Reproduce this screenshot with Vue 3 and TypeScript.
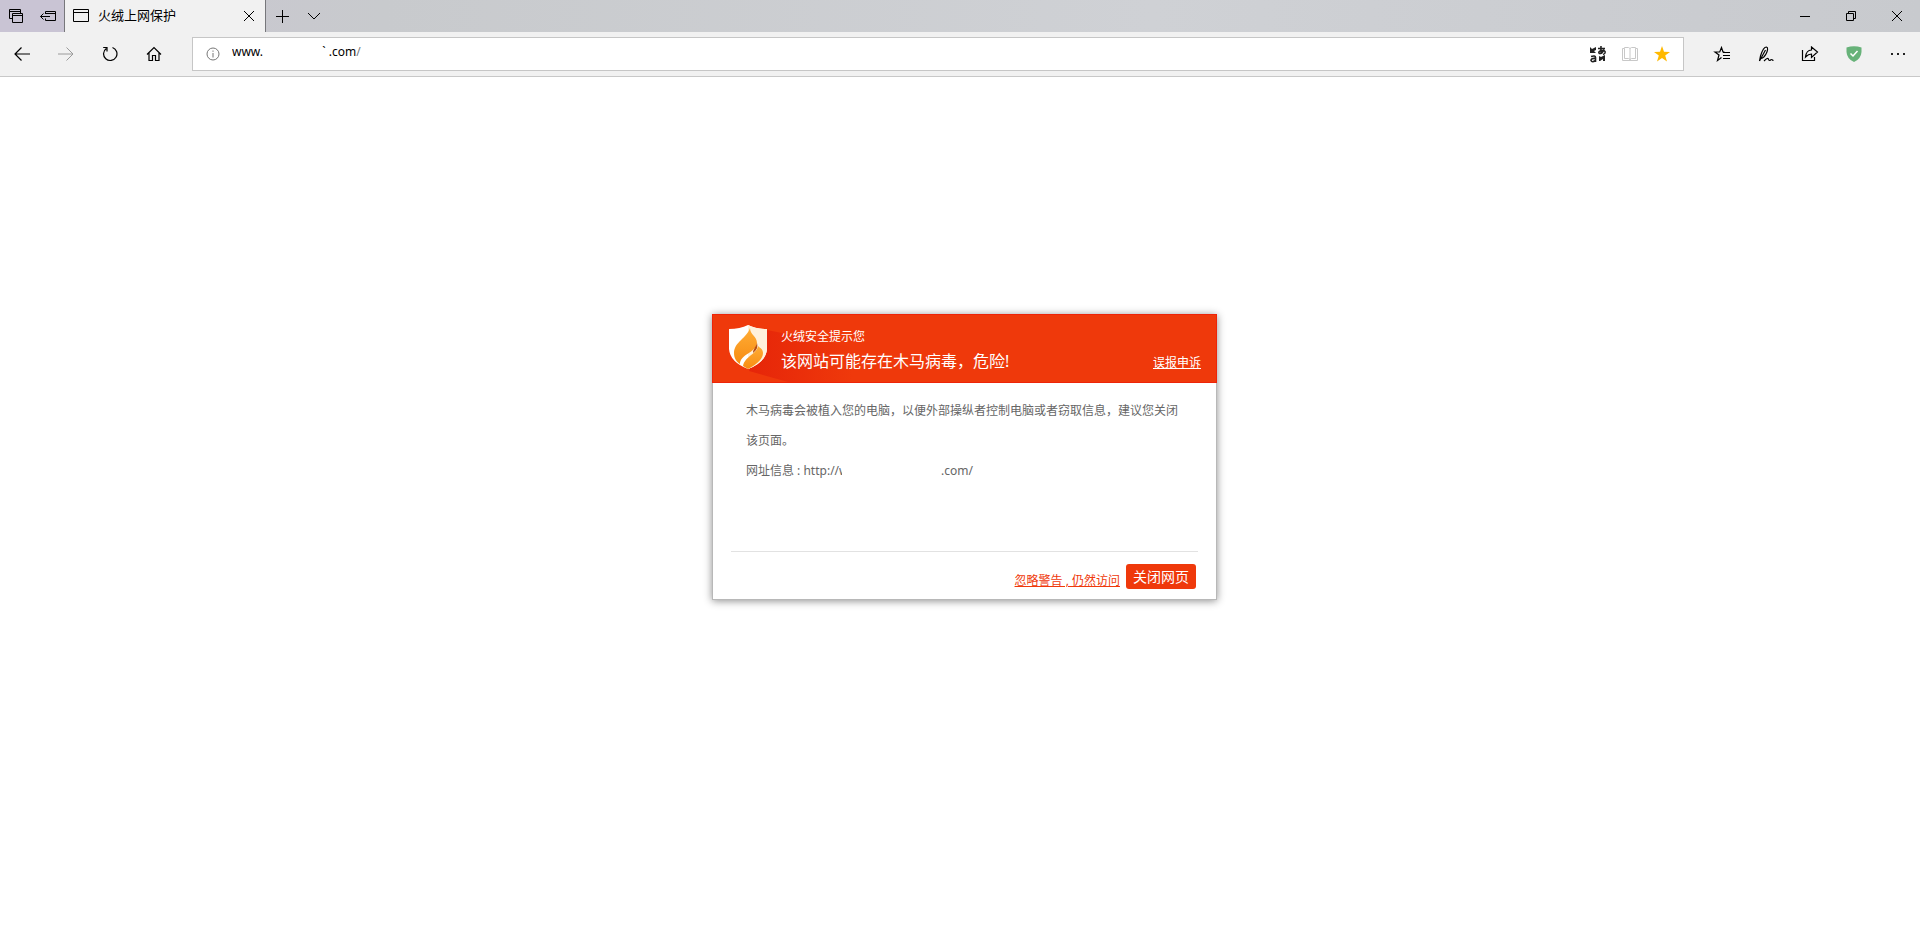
<script setup lang="ts">
import { ref } from 'vue'

const tabTitle = '火绒上网保护'
const gap = '\u00a0'.repeat(19)
const address = ref(`www.${gap}\`\u00a0.com`)
</script>

<template>
  <div class="browser">
    <header class="tabs">
      <div class="tools">
        <button class="tool" aria-label="已搁置的标签页">
          <svg width="16" height="16" viewBox="0 0 16 16" class="line"><path d="M4.500 10.500H1.500V1.500H12.500V5.500M1.500 3.500H12.500M4.500 5.500H14.500V14.500H4.500ZM4.500 7.500H14.500" /></svg>
        </button>
        <button class="tool" aria-label="搁置标签页">
          <svg width="18" height="16" viewBox="0 0 18 16" class="line"><path d="M6.500 6V3.500H16.500V12.500H6.500V10.500M6.500 5.500H16.500M1.500 8.500H11M4.500 5.500L1.500 8.500L4.500 11.500" /></svg>
        </button>
      </div>
      <div class="tab">
        <svg width="16" height="14" viewBox="0 0 16 14" class="line"><path d="M.5.500H15.500V12.500H.5ZM.5 3.500H15.500" /></svg>
        <span class="tab-title">{{ tabTitle }}</span>
        <button class="tool" aria-label="关闭标签页">
          <svg width="12" height="12" viewBox="0 0 12 12" class="line"><path d="M1 1L11 11M11 1L1 11" /></svg>
        </button>
      </div>
      <button class="tool" aria-label="新建标签页">
        <svg width="14" height="14" viewBox="0 0 14 14" class="line"><path d="M7.500 1V14M1 7.500H14" /></svg>
      </button>
      <button class="tool" aria-label="标签页预览">
        <svg width="14" height="8" viewBox="0 0 14 8" class="line"><path d="M1 1L7 7L13 1" /></svg>
      </button>
      <div class="window-controls">
        <button aria-label="最小化"><svg width="10" height="10" viewBox="0 0 10 10" class="line"><path d="M0 5.500H10" /></svg></button>
        <button aria-label="还原"><svg width="10" height="10" viewBox="0 0 10 10" class="line"><path d="M.5 2.500H7.500V9.500H.5ZM2.500 2.500V.5H9.500V7.500H7.500" /></svg></button>
        <button aria-label="关闭"><svg width="10" height="10" viewBox="0 0 10 10" class="line"><path d="M0 0L10 10M10 0L0 10" /></svg></button>
      </div>
    </header>

    <nav class="toolbar">
      <button aria-label="后退"><svg width="16" height="14" viewBox="0 0 16 14" class="line strong"><path d="M1 7H16M7.500.5L1 7L7.500 13.500" /></svg></button>
      <button aria-label="前进" disabled><svg width="16" height="14" viewBox="0 0 16 14" class="line"><path d="M0 7H15M8.500.5L15 7L8.500 13.500" /></svg></button>
      <button aria-label="刷新"><svg width="16" height="16" viewBox="0 0 16 16" class="line strong"><path d="M10.500 1.500A6.700 6.700 0 1 1 4.300 2.400M1.200 1.500H5V5.500" /></svg></button>
      <button aria-label="主页"><svg width="16" height="16" viewBox="0 0 16 16" class="line strong"><path d="M1 8.500L8 1.500L15 8.500M3 7V14.500H6.500V9.500H9.500V14.500H13V7" /></svg></button>
      <div class="address">
        <svg width="14" height="14" viewBox="0 0 14 14" class="line info"><circle cx="7" cy="7" r="6" /><path d="M7 6V10.500M7 3.500V4.800" /></svg>
        <div class="url">
          <input v-model="address" type="text" aria-label="地址栏" spellcheck="false" /><span>/</span>
        </div>
        <button class="tool" aria-label="翻译">
          <svg width="18" height="18" viewBox="0 0 18 18">
            <path d="M1 2L3 4L7 2V5L5 6L7 8H1ZM10 11L12 12L16 10V16H14V14L11 16H10Z" fill="#222" />
            <path d="M9 3.500H16M12 1Q11.500 6 12.500 9M15 4.500Q13.500 8.500 10.500 8.500Q8.500 7 12 5.500Q17 5 16 8Q15.500 9 14 9.500M2 11.500Q6.500 10 6.500 12.500V17M6.500 13.500Q2 13 2 15.500Q3 18 6.500 15.500" class="glyph" />
          </svg>
        </button>
        <button class="tool" aria-label="阅读视图">
          <svg width="16" height="16" viewBox="0 0 16 16" class="line book"><path d="M.5 2.500H2.500V1.500H6.500L8 2.500L9.500 1.500H13.500V2.500H15.500V14.500H.5ZM8 2.500V14.500M2.500 2.500V12.500H6.500L8 13.500L9.500 12.500H13.500V2.500" /></svg>
        </button>
        <button class="tool" aria-label="收藏">
          <svg width="16" height="16" viewBox="0 0 16 16"><path d="M8 0L10 5.700L16 5.900L11.200 9.600L13 15.500L8 12L3 15.500L4.800 9.600L0 5.900L6 5.700Z" fill="#ffb900" /></svg>
        </button>
      </div>
      <button aria-label="收藏夹"><svg width="18" height="16" viewBox="0 0 18 16" class="line strong"><path d="M11.500 6H10L8.500 1.500L6.700 6H2L6 9L4.500 14.500L8.500 11.500M10 6.500H17M10 9.500H17M10 12.500H17" /></svg></button>
      <button aria-label="添加笔记"><svg width="16" height="16" viewBox="0 0 16 16" class="line strong"><path d="M1.500 15L2.500 10C4 5 6.500 1 8.500 1C10.500 1.500 9.500 5 8 8C7 10 5 12 3 12.500M1.500 15L7.500 4M6 15C7.500 13.500 9 12 10 12.500C11 13 10 14.500 11.500 14.500C12.500 14.500 12.500 13.500 13.500 13.500C14.500 13.500 14.500 14.500 15.500 14.500" /></svg></button>
      <button aria-label="共享"><svg width="18" height="16" viewBox="0 0 18 16" class="line strong"><path d="M1.500 4V14.500H13.500V11M4.500 11C5 6.500 7 4 10.500 4V1L16.500 6L10.500 11.500V8C8 8 6.500 9 4.500 11Z" /></svg></button>
      <button aria-label="安全防护"><svg width="16" height="16" viewBox="0 0 16 16"><path d="M.5 1.500Q8-1 15.500 1.500V6Q15 13 8 16Q1 13 .5 6Z" fill="#67b279" /><path d="M4.500 7.500L7 10L11.500 5" fill="none" stroke="#fff" stroke-width="1.500" /></svg></button>
      <button aria-label="更多"><svg width="16" height="4" viewBox="0 0 16 4"><path d="M1 1H3V3H1ZM7 1H9V3H7ZM13 1H15V3H13Z" fill="#222" /></svg></button>
    </nav>

    <main class="page">
      <section class="warning" role="alertdialog" aria-labelledby="warning-title">
        <header class="warning-head">
          <svg class="backdrop" width="140" height="67" viewBox="0 0 140 67" aria-hidden="true">
            <defs><linearGradient id="shade"><stop offset="0" stop-color="#e62509" /><stop offset="1" stop-color="#ef390b" /></linearGradient></defs>
            <path d="M54 15L140 32V67H75L36 56Z" fill="url(#shade)" />
          </svg>
          <svg class="shield" width="40" height="46" viewBox="0 0 40 46">
            <defs><linearGradient id="flame" x2="0" y2="1"><stop stop-color="#ffad36" /><stop offset="1" stop-color="#f78c12" /></linearGradient></defs>
            <path d="M1 5Q12 5 20 1Q28 5 39 5V25Q38 38 20 45Q2 38 1 25Z" fill="#fff" />
            <path d="M20 1Q28 5 39 5V25Q38 38 20 45Z" fill="#fff1dc" />
            <path d="M22 4C19 14 6 18 6 29C6 35 9 38 12 40C12 30 28 29 29 19C29 12 22 11 22 4Z" fill="url(#flame)" />
            <path d="M29 19C30 23 29 26 25 29C25 25 28 23 29 19Z" fill="#b84e12" />
            <path d="M30 22C29 30 17 32 15 42L20 45C30 40 35 34 35 29C35 25 32 24 30 22Z" fill="url(#flame)" />
          </svg>
          <div class="headings">
            <p>火绒安全提示您</p>
            <h1 id="warning-title">该网站可能存在木马病毒，危险!</h1>
          </div>
          <a href="#" class="appeal">误报申诉</a>
        </header>
        <div class="detail">
          <p>木马病毒会被植入您的电脑，以便外部操纵者控制电脑或者窃取信息，建议您关闭该页面。</p>
          <p class="site"><span>网址信息 : http://</span><span class="cut">w</span><span>.com/</span></p>
        </div>
        <footer class="actions">
          <a href="#">忽略警告 , 仍然访问</a>
          <button>关闭网页</button>
        </footer>
      </section>
    </main>
  </div>
</template>

<style>
body {
  margin: 0;
  background: #fff;
}
</style>

<style scoped>
* {
  box-sizing: border-box;
}
.browser {
  min-height: 100vh;
  display: flex;
  flex-direction: column;
  font: 12px/20px "Noto Sans", "Noto Sans CJK SC", sans-serif;
  color: #000;
}
button {
  flex: none;
  display: flex;
  align-items: center;
  justify-content: center;
  padding: 0;
  border: 0;
  background: none;
  color: inherit;
  font: inherit;
}
svg {
  flex: none;
}
.line {
  fill: none;
  stroke: currentColor;
  stroke-width: 1;
}
.strong {
  stroke-width: 1.2;
}
.tabs {
  display: flex;
  height: 32px;
  background: linear-gradient(90deg, #c9c5d2 0, #c8cacd 20%, #cfd1d5 60%, #c8cace 100%);
}
.tools {
  display: flex;
  background: #c9c4d4;
}
.tool {
  width: 32px;
  height: 32px;
}
.tab {
  display: flex;
  align-items: center;
  width: 202px;
  padding-left: 8px;
  background: #f1f1f1;
  border: solid #77777b;
  border-width: 0 1px;
}
.tab-title {
  flex: 1;
  padding: 0 0 2px 9px;
  font-size: 13px;
}
.window-controls {
  display: flex;
  margin-left: auto;
}
.window-controls button {
  width: 46px;
}
.toolbar {
  display: flex;
  align-items: center;
  height: 45px;
  background: #f1f1f1;
  border-bottom: 1px solid #c8c8c8;
}
.toolbar > button {
  width: 44px;
  height: 44px;
}
.toolbar > button:disabled {
  color: #9a9a9a;
}
.address {
  flex: 1;
  display: flex;
  align-items: center;
  height: 34px;
  margin: 0 16px;
  padding: 0 5px 0 13px;
  background: #fff;
  border: 1px solid #c6c6c6;
}
.info {
  color: #777;
}
.url {
  flex: 1;
  display: flex;
  align-items: center;
  padding: 0 0 4px 12px;
}
.url input {
  field-sizing: content;
  padding: 0;
  border: 0;
  outline: 0;
  background: none;
  color: #000;
  font: inherit;
}
.url span {
  color: #777;
}
.glyph {
  fill: none;
  stroke: #222;
  stroke-width: 1.6;
}
.book {
  color: #c8c8c8;
}
.page {
  flex: 1;
  display: flex;
  justify-content: center;
  align-items: flex-start;
  padding: 237px 0 24px 9px;
}
.warning {
  width: 505px;
  background: #fff;
  box-shadow: 0 1px 8px rgba(0, 0, 0, 0.45);
}
.warning-head {
  position: relative;
  display: flex;
  align-items: center;
  height: 69px;
  padding: 0 15px;
  background: #ef390b;
  border: 1px solid #ee2408;
  color: #fff;
}
.backdrop {
  position: absolute;
  left: 0;
  top: 0;
}
.shield {
  position: relative;
  margin-bottom: 4px;
}
.headings {
  position: relative;
  flex: 1;
  padding: 2px 0 0 13px;
}
.headings p,
.detail p {
  margin: 0;
}
.headings h1 {
  margin: 2px 0 0;
  font-size: 16px;
  line-height: 24px;
  font-weight: 400;
}
.appeal {
  align-self: flex-end;
  margin-bottom: 9px;
  color: #fff;
}
.detail {
  height: 168px;
  padding: 13px 33px 0;
  border: solid #b8b8b8;
  border-width: 0 1px;
  color: #666;
  line-height: 30px;
}
.site {
  display: flex;
}
.cut {
  width: 3px;
  margin-right: 99px;
  overflow: hidden;
}
.actions {
  display: flex;
  align-items: flex-start;
  justify-content: flex-end;
  gap: 6px;
  height: 49px;
  padding: 13px 20px 0;
  border: solid #b8b8b8;
  border-width: 0 1px 1px;
  background: linear-gradient(#e2e2e2, #e2e2e2) center top / calc(100% - 36px) 1px no-repeat;
}
.actions a {
  margin-top: 7px;
  color: #ef390b;
}
.actions button {
  width: 70px;
  height: 25px;
  border-radius: 3px;
  background: #ef390b;
  color: #fff;
  font-size: 14px;
}
</style>
